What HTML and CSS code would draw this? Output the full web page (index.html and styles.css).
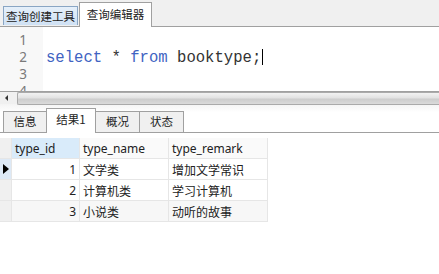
FILE: index.html
```html
<!DOCTYPE html>
<html lang="zh-CN">
<head>
    <meta charset="UTF-8">
    <title>查询编辑器</title>
    <link rel="stylesheet" href="styles.css">
</head>
<body>
    <div class="top-tabs">
        <div class="tab">查询创建工具</div>
        <div class="tab active">查询编辑器</div>
    </div>
    <div class="editor">
        <div class="gutter">
            <div>1</div>
            <div>2</div>
            <div>3</div>
            <div>4</div>
        </div>
        <div class="code">
            <div>&nbsp;</div>
            <div><span class="kw">select</span> * <span class="kw">from</span> booktype;<span class="caret"></span></div>
            <div>&nbsp;</div>
            <div>&nbsp;</div>
        </div>
    </div>
    <div class="hscroll">
        <span class="arrow"></span>
        <div class="thumb"></div>
    </div>
    <div class="result-tabs">
        <div class="rtab">信息</div>
        <div class="rtab active">结果1</div>
        <div class="rtab">概况</div>
        <div class="rtab">状态</div>
    </div>
    <table class="grid">
        <thead>
            <tr>
                <th class="ind"></th>
                <th class="sel">type_id</th>
                <th>type_name</th>
                <th>type_remark</th>
            </tr>
        </thead>
        <tbody>
            <tr>
                <td class="ind cur"><span class="pointer"></span></td>
                <td class="num">1</td>
                <td>文学类</td>
                <td>增加文学常识</td>
            </tr>
            <tr>
                <td class="ind"></td>
                <td class="num">2</td>
                <td>计算机类</td>
                <td>学习计算机</td>
            </tr>
            <tr class="alt">
                <td class="ind"></td>
                <td class="num">3</td>
                <td>小说类</td>
                <td>动听的故事</td>
            </tr>
        </tbody>
    </table>
</body>
</html>
```

FILE: styles.css
```css
body {
    margin: 0;
    width: 439px;
    height: 274px;
    overflow: hidden;
    background: #ffffff;
    font-family: 'Noto Sans', 'Noto Sans CJK SC', sans-serif;
    font-size: 12px;
    color: #222;
}

.top-tabs {
    height: 26px;
    background: #f0f0f0;
    border-bottom: 1px solid #a0a0a0;
    display: flex;
    align-items: flex-end;
    padding-left: 3px;
}
.tab {
    width: 75px;
    height: 19px;
    line-height: 18px;
    text-align: center;
    font-size: 11.5px;
    font-family: 'Noto Sans CJK SC', sans-serif;
    background: linear-gradient(#e6f0fa, #cfe1f4);
    border: 1px solid #8aa6c4;
    border-bottom: none;
    box-sizing: border-box;
    margin-bottom: 1px;
}
.tab.active {
    width: 73px;
    height: 25px;
    line-height: 22px;
    background: #ffffff;
    border-color: #a0a0a0;
    margin-left: 1px;
    margin-bottom: -1px;
}

.editor {
    height: 64px;
    display: flex;
    overflow: hidden;
    background: #ffffff;
}
.gutter {
    width: 43px;
    background: #f8f8f8;
    padding-top: 5px;
    color: #7a7a7a;
    font-size: 13.5px;
    text-align: right;
    box-sizing: border-box;
    padding-right: 16px;
}
.gutter div,
.code div {
    height: 17px;
    line-height: 17px;
}
.code {
    padding-top: 5px;
    padding-left: 3px;
    font-family: 'Liberation Mono', monospace;
    font-size: 15.6px;
    color: #333;
}
.code div {
    white-space: pre;
}
.kw {
    color: #4163c2;
}
.caret {
    display: inline-block;
    width: 1px;
    height: 16px;
    background: #000;
    vertical-align: -3px;
    margin-left: 1px;
}

.hscroll {
    height: 12px;
    border-top: 1px solid #a0a0a0;
    background: #f0f0f0;
    display: flex;
    align-items: center;
}
.arrow {
    width: 0;
    height: 0;
    border-top: 3px solid transparent;
    border-bottom: 3px solid transparent;
    border-right: 3px solid #333;
    margin-left: 5px;
    margin-right: 9px;
}
.thumb {
    flex: 1;
    height: 11px;
    border: 1px solid #aaaaaa;
    border-right: none;
    border-radius: 2px 0 0 2px;
    background: linear-gradient(#f2f2f2, #e2e2e2 45%, #cdcdcd 55%, #dadada);
}

.result-tabs {
    height: 28px;
    border-bottom: 1px solid #a0a0a0;
    display: flex;
    align-items: flex-end;
    padding-left: 3px;
    background: linear-gradient(#f4f4f4, #ffffff 30%);
}
.rtab {
    width: 43px;
    height: 21px;
    line-height: 19px;
    text-align: center;
    box-sizing: border-box;
    font-family: 'Noto Sans CJK SC', sans-serif;
    font-size: 11.5px;
    background: #f0f0f0;
    border: 1px solid #a0a0a0;
    border-bottom: none;
    border-right: none;
}
.rtab:nth-child(4) {
    border-right: 1px solid #a0a0a0;
    width: 45px;
}
.rtab.active {
    width: 50px;
    height: 25px;
    line-height: 20px;
    background: #ffffff;
    margin-bottom: -1px;
    border-right: 1px solid #a0a0a0;
}
.rtab.active + .rtab {
    border-left: none;
}

.grid {
    border-collapse: collapse;
    margin-top: 5px;
    font-size: 12px;
}
.grid th,
.grid td {
    border: 1px solid #e6e6e6;
    padding: 0 3px;
    text-align: left;
    font-weight: normal;
    white-space: nowrap;
}
.grid th {
    height: 20px;
    background: #fafafa;
    border-top: none;
}
.grid td {
    height: 20px;
    font-family: 'Noto Sans CJK SC', sans-serif;
}
.grid th:nth-child(2) { width: 61px; }
.grid th:nth-child(3) { width: 82px; }
.grid th:nth-child(4) { width: 92px; }
.grid th.sel {
    background: #d9ebfa;
}
.grid .ind {
    width: 11px;
    padding: 0;
    background: #f0f0f0;
    border-left: none;
}
.grid .ind.cur {
    background: #dde9f6;
}
.grid td.num {
    text-align: right;
    font-family: 'Noto Sans', sans-serif;
}
.grid tr.alt td {
    background: #f7f7f7;
}
.grid tr.alt td.ind {
    background: #f0f0f0;
}
.pointer {
    display: block;
    width: 0;
    height: 0;
    margin-left: 3px;
    border-top: 5px solid transparent;
    border-bottom: 5px solid transparent;
    border-left: 6px solid #000;
}
```
